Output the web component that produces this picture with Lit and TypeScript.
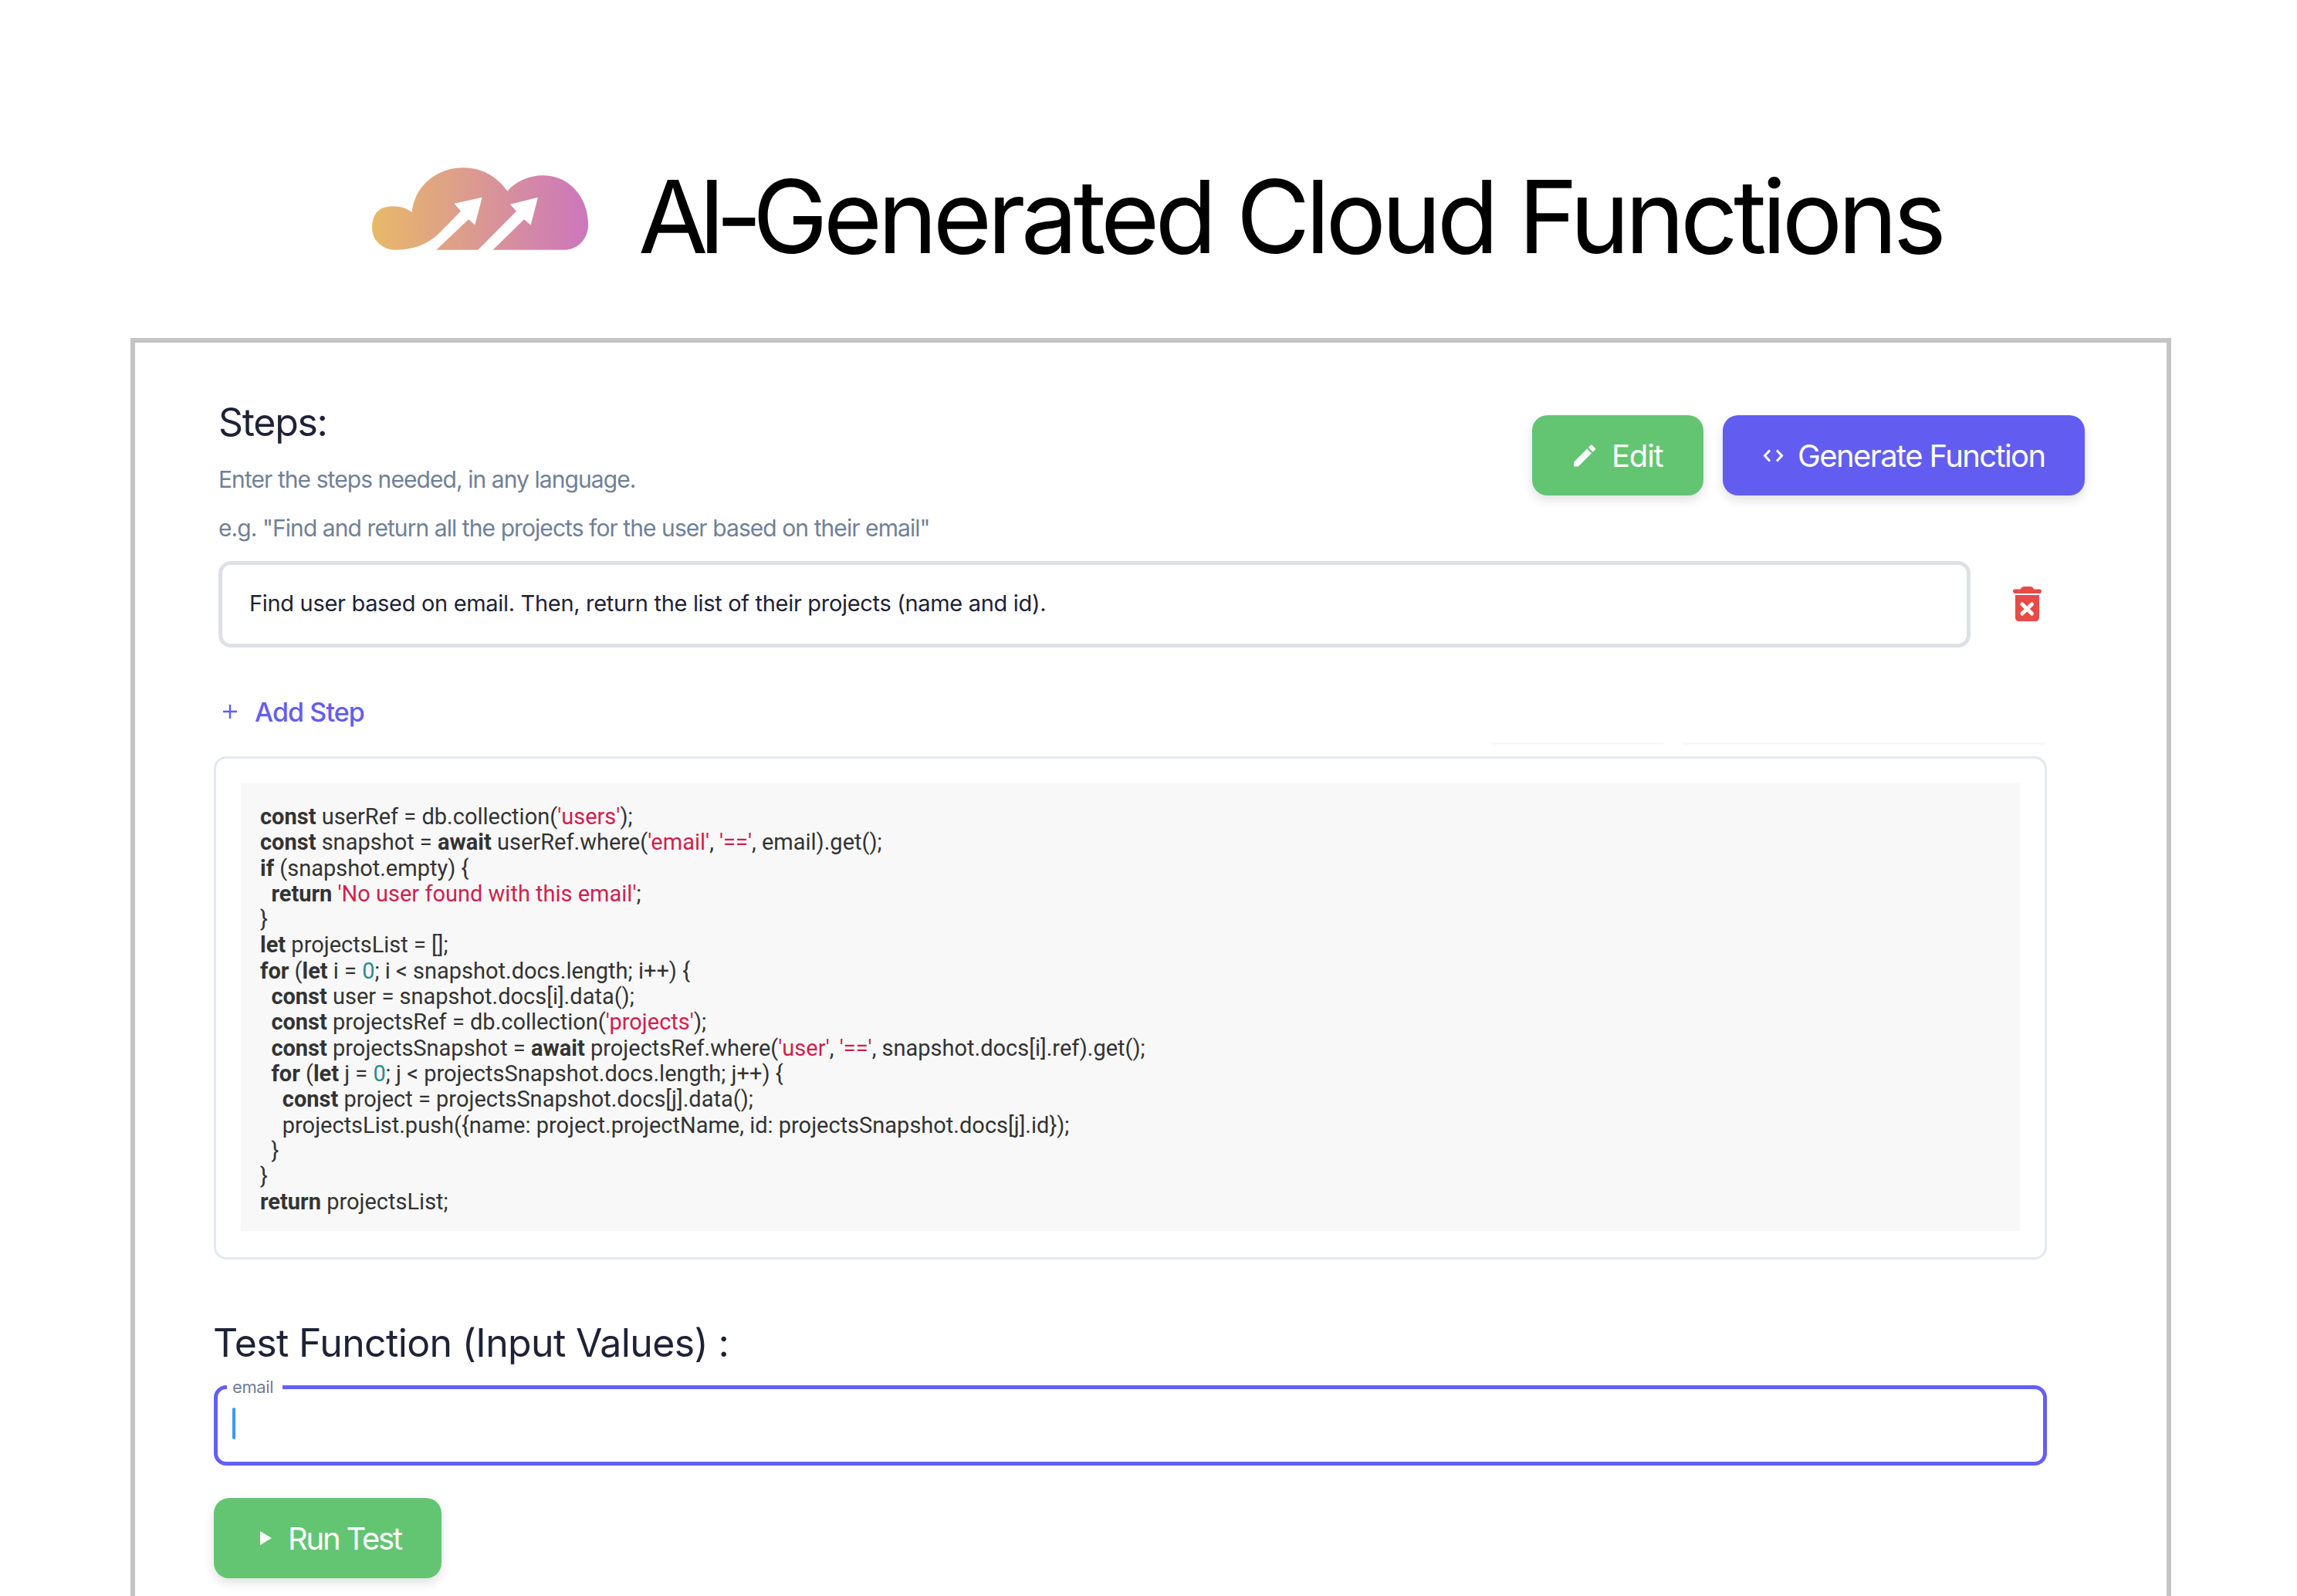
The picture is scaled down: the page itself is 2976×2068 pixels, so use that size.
import { LitElement, html, css, svg } from "lit";
import { customElement } from "lit/decorators.js";

type Tok = [string, string?];
const K = "k", S = "s", N = "n";
const code: Tok[][] = [
  [["const", K], [" userRef = db.collection("], ["'users'", S], [");"]],
  [["const", K], [" snapshot = "], ["await", K], [" userRef.where("], ["'email'", S], [", "], ["'=='", S], [", email).get();"]],
  [["if", K], [" (snapshot.empty) {"]],
  [["  "], ["return", K], [" "], ["'No user found with this email'", S], [";"]],
  [["}"]],
  [["let", K], [" projectsList = [];"]],
  [["for", K], [" ("], ["let", K], [" i = "], ["0", N], ["; i < snapshot.docs.length; i++) {"]],
  [["  "], ["const", K], [" user = snapshot.docs[i].data();"]],
  [["  "], ["const", K], [" projectsRef = db.collection("], ["'projects'", S], [");"]],
  [["  "], ["const", K], [" projectsSnapshot = "], ["await", K], [" projectsRef.where("], ["'user'", S], [", "], ["'=='", S], [", snapshot.docs[i].ref).get();"]],
  [["  "], ["for", K], [" ("], ["let", K], [" j = "], ["0", N], ["; j < projectsSnapshot.docs.length; j++) {"]],
  [["    "], ["const", K], [" project = projectsSnapshot.docs[j].data();"]],
  [["    projectsList.push({name: project.projectName, id: projectsSnapshot.docs[j].id});"]],
  [["  }"]],
  [["}"]],
  [["return", K], [" projectsList;"]],
];

@customElement("app-root")
export class AppRoot extends LitElement {
  static styles = css`
    :host {
      display: block;
      height: 2068px;
      overflow: hidden;
      background: #fff;
      font-family: Inter, "Liberation Sans", sans-serif;
      color: #1e2235;
    }
    * { box-sizing: border-box; }
    .header {
      height: 438px;
      display: flex;
      align-items: flex-start;
      padding: 217px 0 0 482px;
    }
    .logo { width: 280px; height: 107px; flex: none; display: block; }
    .title {
      margin: -1px 0 0 65px;
      font-size: 131px;
      line-height: 130px;
      font-weight: 400;
      color: #000;
      letter-spacing: -5.9px;
      white-space: nowrap;
    }
    .title .tight { letter-spacing: -12.6px; }
    .card {
      margin-left: 169px;
      width: 2644px;
      height: 1640px;
      border: 6px solid #c4c4c4;
      border-bottom: none;
      padding: 94px 106px 0 102px;
    }
    .top { display: flex; justify-content: space-between; align-items: flex-start; padding-left: 6px; height: 189px; }
    .h-steps { margin: -20px 0 0; font-size: 50px; line-height: 58px; font-weight: 400; letter-spacing: -1.3px; }
    .sub {
      margin: 0;
      font-size: 30px;
      line-height: 62.5px;
      color: #718096;
      letter-spacing: -0.93px;
      white-space: nowrap;
    }
    .subs { margin-top: 14px; }
    .actions { display: flex; gap: 25px; }
    .btn {
      height: 104px;
      border: none;
      border-radius: 20px;
      display: flex;
      align-items: center;
      color: #fff;
      font: inherit;
      font-size: 40px;
      letter-spacing: -1.2px;
      box-shadow: 0 6px 14px rgba(0,0,0,.12);
      white-space: nowrap;
      padding: 0;
    }
    .green { background: #63c572; }
    .blue { background: #625df0; }
    .edit { width: 222px; padding-left: 54px; gap: 21px; }
    .gen { width: 469px; padding-left: 52px; gap: 18px; letter-spacing: -1.6px; }
    .run { width: 295px; padding-left: 60px; gap: 21px; letter-spacing: -2.2px; }
    .step-row { display: flex; align-items: center; padding-left: 6px; }
    .step-input {
      width: 2270px;
      height: 112px;
      border: 5px solid #dde0e6;
      border-radius: 16px;
      padding: 0 0 4px 35px;
      display: flex;
      align-items: center;
      font-size: 29px;
      letter-spacing: -0.32px;
      white-space: nowrap;
    }
    .trash { width: 37px; height: 45px; margin: -1px 0 0 55px; flex: none; display: block; }
    .add {
      display: flex;
      align-items: center;
      margin: 55px 0 0 12px;
      height: 56px;
      color: #625df0;
      font-size: 34px;
      font-weight: 500;
      letter-spacing: -0.9px;
      gap: 23px;
    }
    .box {
      position: relative;
      margin-top: 30px;
      width: 2375px;
      height: 652px;
      border: 3px solid #e4e8ee;
      border-radius: 16px;
      padding: 31px 32px 0 32px;
    }
    .ghost {
      position: absolute;
      top: -21px;
      height: 3px;
      background: #f8f8f9;
    }
    .g1 { left: 1653px; width: 222px; }
    .g2 { left: 1900px; width: 470px; }
    pre {
      margin: 0;
      height: 581px;
      background: #f8f8f8;
      padding: 28px 25px 0;
      font-family: Roboto, "Liberation Sans", sans-serif;
      font-size: 29px;
      line-height: 33.3px;
      color: #333;
      letter-spacing: 0;
    }
    .k { font-weight: 700; }
    .s { color: #d01f4f; }
    .n { color: #2a8c8c; }
    .h-test {
      margin: 78px 0 0 -1px;
      font-size: 50px;
      line-height: 60px;
      font-weight: 400;
      letter-spacing: -0.65px;
    }
    .field {
      position: relative;
      margin-top: 25px;
      width: 2375px;
      height: 104px;
      border: 5px solid #635ff5;
      border-radius: 16px;
    }
    .legend {
      position: absolute;
      left: 12px;
      top: -16px;
      padding: 0 12px 0 7px;
      background: #fff;
      font-size: 22px;
      line-height: 26px;
      color: #718096;
      letter-spacing: -0.4px;
    }
    .caret {
      position: absolute;
      left: 19px;
      top: 24px;
      width: 4px;
      height: 41px;
      border-radius: 2px;
      background: #3b99fc;
    }
    .run-wrap { margin-top: 42px; }
    svg { flex: none; display: block; }
  `;

  private logo() {
    return html`<svg class="logo" viewBox="125 112 840 320" aria-hidden="true">
      <defs>
        <linearGradient id="lg" x1="0" x2="1" y1="0" y2="0">
          <stop offset="0" stop-color="#e8b968"></stop>
          <stop offset="1" stop-color="#cc76bd"></stop>
        </linearGradient>
      </defs>
      ${svg`<path fill="url(#lg)" d="M215 432 C165 432 125 395 125 345 C125 310 140 280 165 270 C200 255 250 262 280 285 C290 185 375 112 480 112 C550 112 610 145 651 203 C685 165 735 142 790 142 C890 142 965 225 965 335 C965 390 925 432 870 432 L595 432 L716 313 L742 335 L770 228 L662 255 L686 282 L537 432 L375 432 L500 313 L525 335 L553 228 L445 252 L470 282 L385 368 C340 412 280 432 215 432 Z"></path>`}
    </svg>`;
  }

  render() {
    return html`
      <header class="header">
        ${this.logo()}
        <h1 class="title"><span class="tight">AI-</span>Generated Cloud Functions</h1>
      </header>
      <section class="card">
        <div class="top">
          <div>
            <h2 class="h-steps">Steps:</h2>
            <div class="subs">
              <p class="sub">Enter the steps needed, in any language.</p>
              <p class="sub">e.g. "Find and return all the projects for the user based on their email"</p>
            </div>
          </div>
          <div class="actions">
            <button class="btn green edit">
              <svg width="28" height="29" viewBox="3 3 18 18" fill="#fff"><path d="M3 17.25V21h3.75L17.81 9.94l-3.75-3.75L3 17.25zM20.71 7.04c.39-.39.39-1.02 0-1.41l-2.34-2.34c-.39-.39-1.02-.39-1.41 0l-1.83 1.83 3.75 3.75 1.83-1.83z"></path></svg>
              Edit
            </button>
            <button class="btn blue gen">
              <svg width="27" height="17" viewBox="0 0 27 17" fill="none" stroke="#fff" stroke-width="3"><path d="M9 1.5 2.5 8.5 9 15.5M18 1.5 24.5 8.5 18 15.5"></path></svg>
              Generate Function
            </button>
          </div>
        </div>
        <div class="step-row">
          <div class="step-input">Find user based on email. Then, return the list of their projects (name and id).</div>
          <svg class="trash" viewBox="0 0 37 45">
            <path fill="#e44c45" d="M10 3.500C10.500 1.500 12 0 15 0h7c3 0 4.500 1.500 5 3.500h7.500c1.500 0 2.500 1 2.500 2.500s-1 3-2.500 3H2.500C1 9 0 7.500 0 6s1-2.500 2.500-2.500zM3 11h31v29c0 3-2 5-5 5H8c-3 0-5-2-5-5z"></path>
            <path stroke="#fff" stroke-width="5" stroke-linecap="round" d="M12 23 24.500 35M24.500 23 12 35"></path>
          </svg>
        </div>
        <div class="add">
          <svg width="18" height="18" viewBox="0 0 18 18" stroke="#625df0" stroke-width="2.4"><path d="M9 0v18M0 9h18"></path></svg>
          Add Step
        </div>
        <div class="box">
          <div class="ghost g1"></div>
          <div class="ghost g2"></div>
          <pre>${code.map((l) => html`<div>${l.map(([t, c]) => (c ? html`<span class=${c}>${t}</span>` : t))}</div>`)}</pre>
        </div>
        <h2 class="h-test">Test Function (Input Values) :</h2>
        <div class="field">
          <span class="legend">email</span>
          <span class="caret"></span>
        </div>
        <div class="run-wrap">
          <button class="btn green run">
            <svg width="15" height="18" viewBox="0 0 15 18" fill="#fff"><path d="M0 0 15 9 0 18z"></path></svg>
            Run Test
          </button>
        </div>
      </section>
    `;
  }
}
